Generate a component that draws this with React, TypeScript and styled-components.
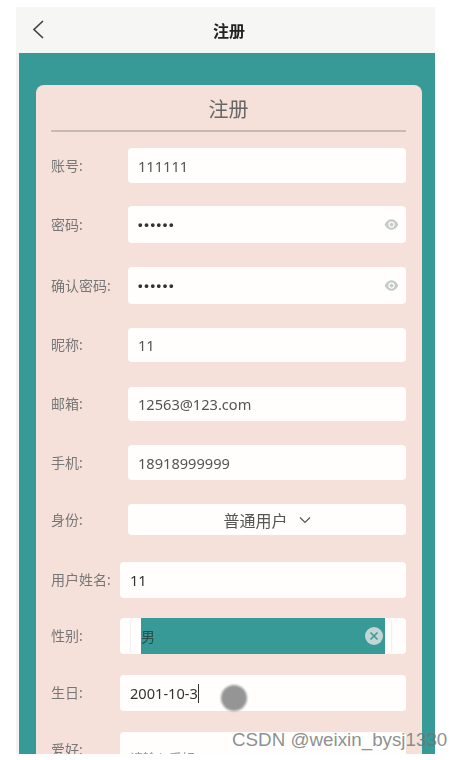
import React from "react";
import styled, { createGlobalStyle } from "styled-components";

const Global = createGlobalStyle`
  html, body { margin: 0; padding: 0; background: #fff; }
  body { font-family: "Noto Sans", "Noto Sans CJK SC", sans-serif; width: 464px; height: 760px; overflow: hidden; position: relative; }
`;

const Frame = styled.div`
  margin: 7px 0 0 16px;
  width: 419px;
  height: 747px;
  overflow: hidden;
  background: #f3f3f2;
  filter: blur(0.5px);
`;

const Header = styled.header`
  height: 46px;
  background: #f6f6f5;
  display: flex;
  align-items: center;
  justify-content: center;
  position: relative;
  padding-left: 7px;
  box-sizing: border-box;
  font-size: 16px;
  font-weight: 700;
  color: #222;
`;

const Back = styled.svg`
  position: absolute;
  left: 15px;
  top: 11px;
  width: 16px;
  height: 22px;
`;

const Page = styled.main`
  margin-left: 3px;
  height: 701px;
  background: #379a96;
  padding: 32px 13px 0 17px;
  box-sizing: border-box;
  overflow: hidden;
`;

const Card = styled.section`
  background: #f5e1d9;
  border-radius: 8px 8px 0 0;
  padding: 0 16px 0 15px;
  height: 700px;
`;

const Title = styled.h1`
  margin: 0;
  height: 47px;
  line-height: 49px;
  box-sizing: border-box;
  border-bottom: 2px solid #c9b9b3;
  text-align: center;
  font-size: 20px;
  font-weight: 400;
  color: #666;
`;

const Row = styled.div<{ $gap: number }>`
  display: flex;
  align-items: center;
  margin-top: ${(p) => p.$gap}px;
`;

const Label = styled.label<{ $w: number }>`
  width: ${(p) => p.$w}px;
  flex: none;
  font-size: 14px;
  color: #777;
  white-space: nowrap;
  margin-top: -2px;
`;

const Field = styled.div<{ $h: number; $pad?: number }>`
  flex: 1;
  height: ${(p) => p.$h}px;
  background: #fffefd;
  border-radius: 4px;
  display: flex;
  align-items: center;
  justify-content: space-between;
  padding: 0 7px 0 ${(p) => p.$pad ?? 10}px;
  box-sizing: border-box;
  font-size: 14.6px;
  color: #555;
`;

const Dots = styled.span`
  font-size: 13px;
  letter-spacing: 1.65px;
  color: #333;
  font-family: "Liberation Sans", sans-serif;
  font-weight: 700;
`;

const DarkValue = styled.span`
  color: #333;
  display: inline-flex;
  align-items: center;
`;

const Placeholder = styled.span`
  color: #999;
  font-size: 13px;
  margin-top: 14px;
`;

const Caret = styled.i`
  display: inline-block;
  width: 1px;
  height: 19px;
  background: #333;
`;

const SelectBox = styled(Field)`
  justify-content: center;
  gap: 11px;
  padding: 0;
  font-size: 16px;
  color: #555;
`;

const GenderOuter = styled(Field)`
  padding: 0 14px 0 10px;
`;

const GenderInner = styled.div`
  flex: 1;
  height: 100%;
  box-sizing: border-box;
  border: 1px solid #f3efec;
  border-width: 0 1px;
  border-radius: 4px;
  padding: 0 6px 0 10px;
  display: flex;
`;

const GenderValue = styled.div`
  flex: 1;
  background: #379a96;
  display: flex;
  align-items: center;
  justify-content: space-between;
  padding-right: 2px;
  font-size: 14px;
  color: #24504d;
`;

const ClearDot = styled.span`
  width: 18px;
  height: 18px;
  border-radius: 50%;
  background: #c3d6d5;
  display: flex;
  align-items: center;
  justify-content: center;
`;

const Touch = styled.div`
  position: absolute;
  left: 221px;
  top: 685px;
  width: 26px;
  height: 26px;
  border-radius: 50%;
  background: #959595;
  filter: blur(0.8px);
`;

const Watermark = styled.div`
  position: absolute;
  left: 232px;
  top: 729px;
  font-family: "Liberation Sans", sans-serif;
  font-size: 18.8px;
  line-height: 22px;
  color: rgba(110, 115, 115, 0.8);
  white-space: nowrap;
`;

const Eye = () => (
  <svg width="15" height="13" viewBox="0 0 24 20" fill="none">
    <path d="M1 10C4 4 8 1.5 12 1.5S20 4 23 10c-3 6-7 8.5-11 8.5S4 16 1 10Z" fill="#c4cbc9" />
    <circle cx="12" cy="10" r="5" fill="#fffefd" />
    <circle cx="12" cy="10" r="3" fill="#c4cbc9" />
  </svg>
);

export default function App() {
  return (
    <>
      <Global />
      <Frame>
        <Header>
          <Back viewBox="0 0 16 22" fill="none">
            <path d="M12 3 3 11.5 12 20" stroke="#444" strokeWidth="1.7" />
          </Back>
          注册
        </Header>
        <Page>
          <Card>
            <Title>注册</Title>
            <Row $gap={16}>
              <Label $w={77}>账号:</Label>
              <Field $h={35}>111111</Field>
            </Row>
            <Row $gap={23}>
              <Label $w={77}>密码:</Label>
              <Field $h={37}>
                <Dots>••••••</Dots>
                <Eye />
              </Field>
            </Row>
            <Row $gap={24}>
              <Label $w={77}>确认密码:</Label>
              <Field $h={37}>
                <Dots>••••••</Dots>
                <Eye />
              </Field>
            </Row>
            <Row $gap={24}>
              <Label $w={77}>昵称:</Label>
              <Field $h={34}>11</Field>
            </Row>
            <Row $gap={25}>
              <Label $w={77}>邮箱:</Label>
              <Field $h={34}>12563@123.com</Field>
            </Row>
            <Row $gap={24}>
              <Label $w={77}>手机:</Label>
              <Field $h={35}>18918999999</Field>
            </Row>
            <Row $gap={24}>
              <Label $w={77}>身份:</Label>
              <SelectBox $h={31}>
                普通用户
                <svg width="12" height="8" viewBox="0 0 12 8" fill="none">
                  <path d="M1 1.5 6 6.5 11 1.5" stroke="#555" strokeWidth="1.2" />
                </svg>
              </SelectBox>
            </Row>
            <Row $gap={27}>
              <Label $w={69}>用户姓名:</Label>
              <Field $h={36}>
                <DarkValue>11</DarkValue>
              </Field>
            </Row>
            <Row $gap={20}>
              <Label $w={69}>性别:</Label>
              <GenderOuter $h={36}>
                <GenderInner>
                  <GenderValue>
                    男
                    <ClearDot>
                      <svg width="10" height="10" viewBox="0 0 10 10" fill="none">
                        <path d="M1.5 1.5 8.5 8.5M8.5 1.5 1.5 8.5" stroke="#379a96" strokeWidth="1.5" />
                      </svg>
                    </ClearDot>
                  </GenderValue>
                </GenderInner>
              </GenderOuter>
            </Row>
            <Row $gap={21}>
              <Label $w={69}>生日:</Label>
              <Field $h={36}>
                <DarkValue>
                  2001-10-3
                  <Caret />
                </DarkValue>
              </Field>
            </Row>
            <Row $gap={21}>
              <Label $w={69}>爱好:</Label>
              <Field $h={36}>
                <Placeholder>请输入爱好</Placeholder>
              </Field>
            </Row>
          </Card>
        </Page>
      </Frame>
      <Touch />
      <Watermark>CSDN @weixin_bysj1330</Watermark>
    </>
  );
}
